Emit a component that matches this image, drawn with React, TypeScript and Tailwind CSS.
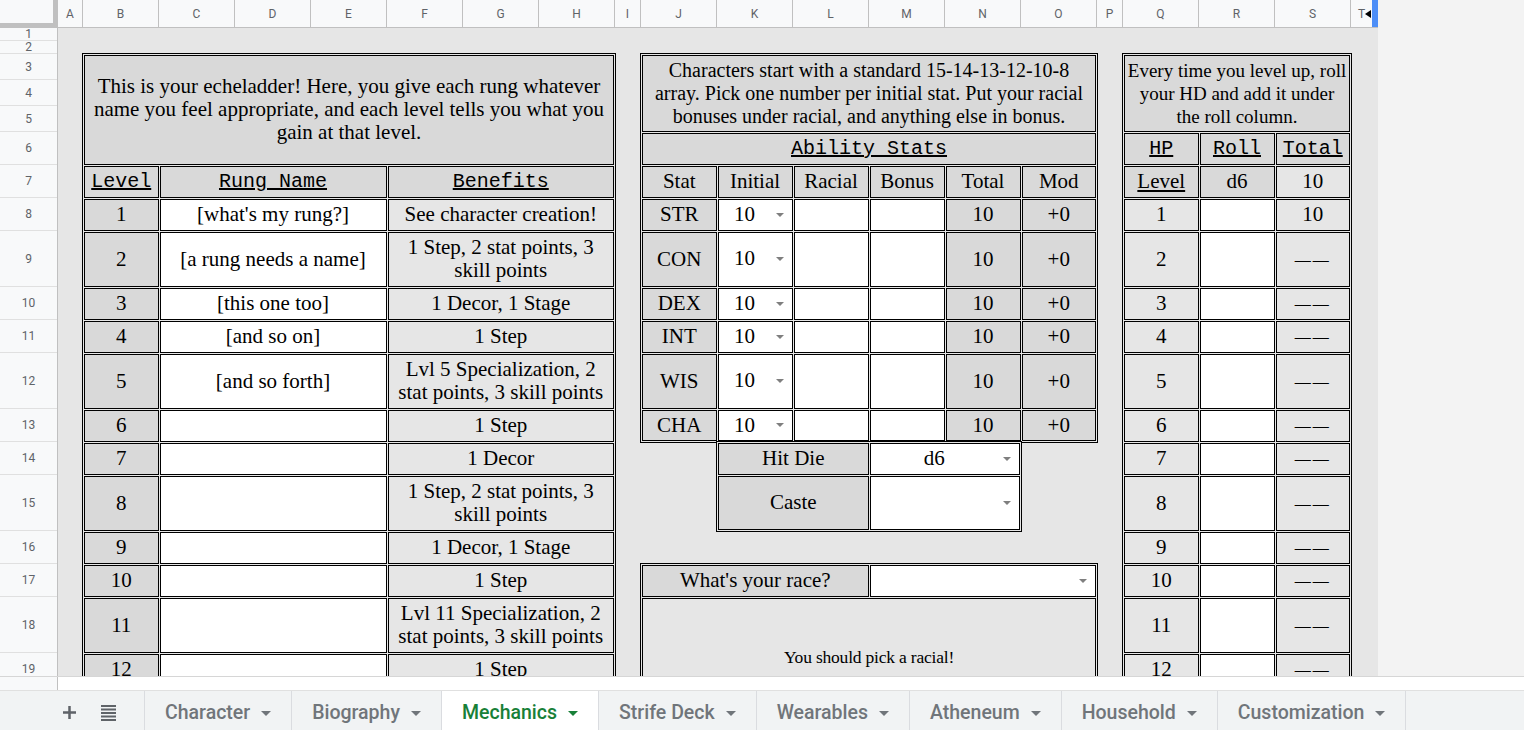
import React from 'react';

const SERIF = "font-['Liberation_Serif',serif]";
const MONO = "font-['Liberation_Mono',monospace]";
const UI = "font-['Roboto',sans-serif]";

const colHeads = [
  { l: 'A', w: 'w-[25px]' },
  { l: 'B', w: 'w-[76px]' },
  { l: 'C', w: 'w-[76px]' },
  { l: 'D', w: 'w-[76px]' },
  { l: 'E', w: 'w-[76px]' },
  { l: 'F', w: 'w-[76px]' },
  { l: 'G', w: 'w-[76px]' },
  { l: 'H', w: 'w-[76px]' },
  { l: 'I', w: 'w-[26px]' },
  { l: 'J', w: 'w-[76px]' },
  { l: 'K', w: 'w-[76px]' },
  { l: 'L', w: 'w-[76px]' },
  { l: 'M', w: 'w-[76px]' },
  { l: 'N', w: 'w-[76px]' },
  { l: 'O', w: 'w-[76px]' },
  { l: 'P', w: 'w-[26px]' },
  { l: 'Q', w: 'w-[76px]' },
  { l: 'R', w: 'w-[76px]' },
  { l: 'S', w: 'w-[76px]' },
];

// row heights, rows 1..20
const rowHeights = [
  'h-[13px]', 'h-[13px]', 'h-[26px]', 'h-[26px]', 'h-[26px]', 'h-[33px]', 'h-[33px]',
  'h-[33px]', 'h-[56px]', 'h-[33px]', 'h-[33px]', 'h-[56px]', 'h-[33px]', 'h-[33px]',
  'h-[56px]', 'h-[33px]', 'h-[33px]', 'h-[56px]', 'h-[33px]', 'h-[33px]',
];

const ladder: [string, React.ReactNode][] = [
  ["[what's my rung?]", 'See character creation!'],
  ['[a rung needs a name]', <>1 Step, 2 stat points, 3<br />skill points</>],
  ['[this one too]', '1 Decor, 1 Stage'],
  ['[and so on]', '1 Step'],
  ['[and so forth]', <>Lvl 5 Specialization, 2<br />stat points, 3 skill points</>],
  ['', '1 Step'],
  ['', '1 Decor'],
  ['', <>1 Step, 2 stat points, 3<br />skill points</>],
  ['', '1 Decor, 1 Stage'],
  ['', '1 Step'],
  ['', <>Lvl 11 Specialization, 2<br />stat points, 3 skill points</>],
  ['', '1 Step'],
  ['', '1 Decor'],
];

const stats = ['STR', 'CON', 'DEX', 'INT', 'WIS', 'CHA'];

const tabs = ['Character', 'Biography', 'Mechanics', 'Strife Deck', 'Wearables', 'Atheneum', 'Household', 'Customization'];

const Caret = ({ className = 'fill-[#7f7f7f]', w = 8 }: { className?: string; w?: number }) => (
  <svg width={w} height={w / 2} viewBox="0 0 8 4" className={className}>
    <path d="M0 0h8L4 4z" />
  </svg>
);

const Cell: React.FC<{ className?: string; children?: React.ReactNode }> = ({
  className = 'bg-[#d9d9d9]',
  children,
}) => (
  <div
    className={`flex items-center justify-center overflow-hidden border border-black px-[3px] text-center leading-[23px] ${className}`}
  >
    {children}
  </div>
);

const Dropdown: React.FC<{ value?: string; className?: string }> = ({ value = '', className = '' }) => (
  <div className={`flex items-center overflow-hidden border border-black bg-white ${className}`}>
    <span className="flex-1 pl-[3px] text-center">{value}</span>
    <span className="flex w-[24px] shrink-0 justify-center">
      <Caret />
    </span>
  </div>
);

const Block: React.FC<{ className: string; children: React.ReactNode }> = ({ className, children }) => (
  <div
    className={`-m-px grid grid-cols-subgrid grid-rows-subgrid gap-px border border-black bg-[#e6e6e6] p-px ${className}`}
  >
    {children}
  </div>
);

const Dash = () => <span className="text-[16px] tracking-[2px]">——</span>;

export default function App() {
  return (
    <div className={`flex h-[730px] w-[1524px] flex-col overflow-hidden bg-[#f3f3f3] ${UI}`}>
      {/* column letters */}
      <div className="flex h-[28px] w-[1378px] shrink-0 border-b border-[#c0c0c0] bg-[#f8f9fa]">
        <div className="h-full w-[58px] shrink-0 border-r-[5px] border-b-[4px] border-[#c0c0c0] bg-[#f8f9fa]" />
        {colHeads.map((c) => (
          <div
            key={c.l}
            className={`${c.w} flex shrink-0 items-center justify-center border-r border-[#c0c0c0] text-[12px] text-[#5f6368]`}
          >
            {c.l}
          </div>
        ))}
        <div className="relative flex w-[27px] shrink-0 items-center justify-center text-[12px] text-[#5f6368]">
          <span className="-ml-[6px]">T</span>
          <svg width="6" height="8" viewBox="0 0 6 8" className="absolute left-[14px] top-[10px] fill-black">
            <path d="M6 0v8L0 4z" />
          </svg>
          <div className="absolute right-0 top-0 h-full w-[6px] bg-[#4d8ef7]" />
        </div>
      </div>

      {/* sheet body */}
      <div className="flex h-[648px] shrink-0">
        <div className="w-[58px] shrink-0 overflow-hidden border-r border-[#c0c0c0] bg-[#f8f9fa]">
          {rowHeights.map((h, i) => (
            <div
              key={i}
              className={`${h} flex items-center justify-center overflow-hidden border-b border-[#e0e0e0] text-[12px] text-[#5f6368]`}
            >
              {i + 1}
            </div>
          ))}
        </div>

        <div className={`w-[1320px] shrink-0 overflow-hidden bg-[#e6e6e6] text-[21px] text-black ${SERIF}`}>
          <div className="grid grid-cols-[25px_76px_76px_76px_76px_76px_76px_76px_26px_76px_76px_76px_76px_76px_76px_26px_76px_76px_76px_27px] grid-rows-[13px_13px_26px_26px_26px_33px_33px_33px_56px_33px_33px_56px_33px_33px_56px_33px_33px_56px_33px_33px]">
            {/* echeladder */}
            <Block className="col-start-2 col-end-9 row-start-3 row-end-21">
              <Cell className="col-span-7 row-span-4 bg-[#d9d9d9] text-[21px]">
                <span className="whitespace-nowrap">
                  This is your echeladder! Here, you give each rung whatever
                  <br />
                  name you feel appropriate, and each level tells you what you
                  <br />
                  gain at that level.
                </span>
              </Cell>
              <Cell className={`bg-[#d9d9d9] text-[20px] ${MONO} underline`}>Level</Cell>
              <Cell className={`col-span-3 bg-[#d9d9d9] text-[20px] ${MONO} underline`}>Rung Name</Cell>
              <Cell className={`col-span-3 bg-[#d9d9d9] text-[20px] ${MONO} underline`}>Benefits</Cell>
              {ladder.map(([rung, gain], i) => (
                <React.Fragment key={i}>
                  <Cell className="bg-[#d9d9d9]">{i + 1}</Cell>
                  <Cell className="col-span-3 bg-white">{rung}</Cell>
                  <Cell className="col-span-3 bg-[#e6e6e6]">{gain}</Cell>
                </React.Fragment>
              ))}
            </Block>

            {/* ability stats */}
            <Block className="col-start-10 col-end-16 row-start-3 row-end-14">
              <Cell className="col-span-6 row-span-3 bg-[#d9d9d9] text-[20px]">
                <span className="whitespace-nowrap">
                  Characters start with a standard 15-14-13-12-10-8
                  <br />
                  array. Pick one number per initial stat. Put your racial
                  <br />
                  bonuses under racial, and anything else in bonus.
                </span>
              </Cell>
              <Cell className={`col-span-6 bg-[#d9d9d9] text-[20px] ${MONO} underline`}>Ability Stats</Cell>
              {['Stat', 'Initial', 'Racial', 'Bonus', 'Total', 'Mod'].map((h) => (
                <Cell key={h} className="bg-[#d9d9d9]">
                  {h}
                </Cell>
              ))}
              {stats.map((s) => (
                <React.Fragment key={s}>
                  <Cell className="bg-[#d9d9d9]">{s}</Cell>
                  <Dropdown value="10" />
                  <Cell className="bg-white" />
                  <Cell className="bg-white" />
                  <Cell className="bg-[#d9d9d9]">10</Cell>
                  <Cell className="bg-[#d9d9d9]">+0</Cell>
                </React.Fragment>
              ))}
            </Block>

            {/* hit die / caste */}
            <Block className="col-start-11 col-end-15 row-start-14 row-end-16">
              <Cell className="col-span-2 bg-[#d9d9d9]">Hit Die</Cell>
              <Dropdown value="d6" className="col-span-2" />
              <Cell className="col-span-2 bg-[#d9d9d9]">Caste</Cell>
              <Dropdown className="col-span-2" />
            </Block>

            {/* race */}
            <Block className="col-start-10 col-end-16 row-start-17 row-end-21">
              <Cell className="col-span-3 bg-[#d9d9d9]">What's your race?</Cell>
              <Dropdown className="col-span-3" />
              <Cell className="col-span-6 row-span-3 bg-[#e6e6e6] text-[17.5px] tracking-[-0.2px]">
                You should pick a racial!
              </Cell>
            </Block>

            {/* hit points */}
            <Block className="col-start-17 col-end-20 row-start-3 row-end-21">
              <Cell className="col-span-3 row-span-3 bg-[#d9d9d9] text-[19px]">
                <span className="whitespace-nowrap">
                  Every time you level up, roll
                  <br />
                  your HD and add it under
                  <br />
                  the roll column.
                </span>
              </Cell>
              <Cell className={`bg-[#d9d9d9] text-[20px] ${MONO} underline`}>HP</Cell>
              <Cell className={`bg-[#d9d9d9] text-[20px] ${MONO} underline`}>Roll</Cell>
              <Cell className={`bg-[#d9d9d9] text-[20px] ${MONO} underline`}>Total</Cell>
              <Cell className="bg-[#d9d9d9] underline">Level</Cell>
              <Cell className="bg-[#d9d9d9]">d6</Cell>
              <Cell className="bg-[#e6e6e6]">10</Cell>
              {ladder.map((_, i) => (
                <React.Fragment key={i}>
                  <Cell className="bg-[#e6e6e6]">{i + 1}</Cell>
                  <Cell className="bg-white" />
                  <Cell className="bg-[#e6e6e6]">{i === 0 ? '10' : <Dash />}</Cell>
                </React.Fragment>
              ))}
            </Block>
          </div>
        </div>
      </div>

      {/* scrollbar strip */}
      <div className="flex h-[14px] shrink-0 border-t border-[#d6d6d6] bg-white">
        <div className="h-full w-[58px] border-r border-[#c0c0c0] bg-[#f8f9fa]" />
      </div>

      {/* sheet tabs */}
      <div className="flex h-[40px] shrink-0 border-t border-[#e0e0e0] bg-[#f1f3f4]">
        <div className="flex w-[145px] shrink-0 items-center gap-[25px] border-r border-[#dadce0] pl-[63px] pt-[4px]">
          <svg width="13" height="13" viewBox="0 0 13 13" className="fill-[#5f6368]">
            <rect x="5.25" y="0" width="2.5" height="13" />
            <rect x="0" y="5.25" width="13" height="2.5" />
          </svg>
          <svg width="15" height="16" viewBox="0 0 15 16" className="fill-[#5f6368]">
            <rect x="0" y="0" width="15" height="2" />
            <rect x="0" y="3.5" width="15" height="2" />
            <rect x="0" y="7" width="15" height="2" />
            <rect x="0" y="10.5" width="15" height="2" />
            <rect x="0" y="14" width="15" height="2" />
          </svg>
        </div>
        {tabs.map((t) => {
          const active = t === 'Mechanics';
          return (
            <div
              key={t}
              className={`flex h-full shrink-0 items-center gap-[11px] border-r border-[#dadce0] px-[20px] pt-[5px] text-[19.5px] font-medium ${
                active ? 'bg-white text-[#188038]' : 'text-[#70757a]'
              }`}
            >
              <span>{t}</span>
              <Caret w={10} className={active ? 'fill-[#188038]' : 'fill-[#70757a]'} />
            </div>
          );
        })}
      </div>
    </div>
  );
}
